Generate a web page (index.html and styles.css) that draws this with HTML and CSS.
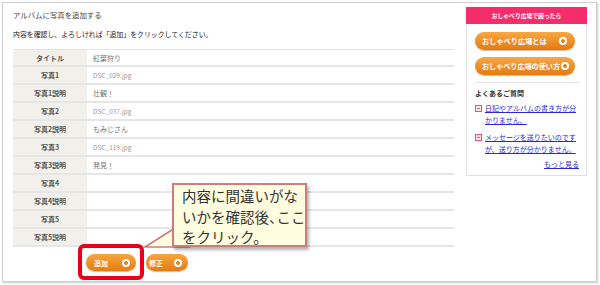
FILE: index.html
```html
<!DOCTYPE html>
<html lang="ja">
<head>
<meta charset="utf-8">
<link rel="stylesheet" href="styles.css">
</head>
<body>
<div class="frame">
  <div class="main">
    <div class="title">アルバムに写真を追加する</div>
    <div class="lead">内容を確認し、よろしければ「追加」をクリックしてください。</div>
    <div class="table">
      <div class="row"><div class="lab">タイトル</div><div class="val">紅葉狩り</div></div>
      <div class="row"><div class="lab">写真1</div><div class="val file">DSC_029.jpg</div></div>
      <div class="row"><div class="lab">写真1説明</div><div class="val">壮観！</div></div>
      <div class="row"><div class="lab">写真2</div><div class="val file">DSC_037.jpg</div></div>
      <div class="row"><div class="lab">写真2説明</div><div class="val">もみじさん</div></div>
      <div class="row"><div class="lab">写真3</div><div class="val file">DSC_119.jpg</div></div>
      <div class="row"><div class="lab">写真3説明</div><div class="val">発見！</div></div>
      <div class="row"><div class="lab">写真4</div><div class="val"></div></div>
      <div class="row"><div class="lab">写真4説明</div><div class="val"></div></div>
      <div class="row"><div class="lab">写真5</div><div class="val"></div></div>
      <div class="row"><div class="lab">写真5説明</div><div class="val"></div></div>
    </div>
    <div class="actions">
      <span class="pill pill-add">追加<i class="dot"></i></span>
      <span class="pill pill-edit">修正<i class="dot"></i></span>
    </div>
  </div>
  <div class="side">
    <div class="side-head">おしゃべり広場で困ったら</div>
    <div class="side-body">
      <span class="sbtn">おしゃべり広場とは<i class="dot"></i></span>
      <span class="sbtn sbtn-2">おしゃべり広場の使い方<i class="dot"></i></span>
      <div class="sep"></div>
      <div class="faq-title">よくあるご質問</div>
      <div class="faq"><i class="ficon"></i><a href="#">日記やアルバムの書き方が分かりません。</a></div>
      <div class="faq"><i class="ficon"></i><a href="#">メッセージを送りたいのですが、送り方が分かりません。</a></div>
      <div class="more"><a href="#">もっと見る</a></div>
    </div>
  </div>

  <div class="highlight"></div>
  <svg class="tail" width="50" height="30" viewBox="0 0 50 30">
    <polygon points="34,5 4,24 48,24" fill="#fffde0" stroke="#cf7b7b" stroke-width="1.6"/>
  </svg>
  <div class="callout">内容に間違いがな<br>いかを確認後<span class="narrow">、</span>ここ<br>をクリック。</div>
</div>
</body>
</html>
```
FILE: styles.css
```css
* { box-sizing: border-box; }
html, body { margin: 0; padding: 0; background: #fff; }
body {
  width: 600px;
  height: 285px;
  overflow: hidden;
  font-family: "Noto Sans CJK JP", "Noto Sans", sans-serif;
}
.frame {
  position: relative;
  margin: 2px 3px 0 2px;
  height: 280px;
  border: 1px solid #cfcfcf;
  box-shadow: 1px 1px 0 #dcdcdc, 2px 2px 0 #eeeeee;
  display: flex;
  align-items: flex-start;
}
.main {
  padding: 6px 0 0 10px;
  width: 451px;
}
.title {
  font-size: 7.4px;
  line-height: 12px;
  color: #444;
}
.lead {
  margin-top: 7px;
  font-size: 6.9px;
  line-height: 12px;
  color: #222;
}
.table {
  margin-top: 9px;
  width: 441px;
  border-top: 1px solid #e4e4e4;
}
.row {
  display: flex;
  height: 18px;
  border-bottom: 2px solid #e6e6e6;
}
.row:first-child { height: 17px; }
.lab {
  flex: none;
  width: 74px;
  background: #f1f0ea;
  color: #555;
  font-size: 7px;
  font-weight: bold;
  text-align: center;
  line-height: 16px;
}
.val {
  padding-left: 6px;
  color: #777;
  font-size: 7px;
  line-height: 16px;
}
.val.file { color: #999; font-size: 6.5px; }
.actions {
  display: flex;
  gap: 10px;
  margin: 7px 0 0 73px;
}
.pill {
  display: flex;
  align-items: center;
  height: 17px;
  border-radius: 9px;
  background: linear-gradient(#f6a63f, #e57c12);
  box-shadow: 0 1px 1px rgba(120,60,0,.35);
  color: #fff;
  font-size: 7px;
  font-weight: bold;
  padding-left: 8px;
}
.pill-add { width: 50px; }
.pill-edit { width: 42px; padding-left: 3px; }
.pill .dot { margin-left: auto; margin-right: 6px; }
.dot {
  flex: none;
  display: block;
  width: 8px;
  height: 8px;
  border-radius: 50%;
  background: radial-gradient(circle, #e8861a 0 1.6px, #fff 2px);
}
.side {
  margin-left: 12px;
  margin-top: 4px;
  width: 121px;
  border: 1px solid #e0e0e0;
  border-top: none;
}
.side-head {
  height: 17px;
  margin: 0 -1px;
  background: #f52d6b;
  color: #fff;
  font-size: 5.8px;
  font-weight: bold;
  text-align: center;
  line-height: 17px;
}
.side-body {
  padding: 8px 7px 5px 8px;
  display: flex;
  flex-direction: column;
}
.sbtn {
  display: flex;
  align-items: center;
  white-space: nowrap;
  width: 100px;
  height: 18px;
  border-radius: 9px;
  background: linear-gradient(#f8a844, #e37a10);
  box-shadow: 0 1px 1px rgba(120,60,0,.35);
  color: #fff;
  font-size: 7.2px;
  font-weight: bold;
  padding-left: 7px;
  margin-bottom: 7px;
}
.sbtn .dot { margin-left: auto; margin-right: 8px; }
.sbtn-2 { letter-spacing: -0.1px; }
.sbtn-2 .dot { margin-left: 1px; margin-right: 5px; }
.sep {
  height: 1px;
  background: #e6e6e6;
  margin: 0 0 4px 0;
  width: 105px;
}
.faq-title {
  font-size: 7px;
  font-weight: bold;
  color: #333;
  line-height: 12px;
  margin-bottom: 4px;
}
.faq {
  display: flex;
  align-items: flex-start;
  font-size: 7px;
  line-height: 11.5px;
  margin-bottom: 6px;
}
.faq a, .more a { color: #2a2ad0; text-decoration: underline; }
.ficon {
  flex: none;
  width: 7px;
  height: 7px;
  margin: 2px 3px 0 0;
  border: 1px solid #ee4f7a;
  background: #fde9ee;
  position: relative;
}
.ficon::after {
  content: "";
  position: absolute;
  left: 1px; top: 2px;
  width: 3px; height: 1px;
  background: #ee4f7a;
}
.more {
  text-align: right;
  font-size: 7px;
  line-height: 11px;
  margin-top: -2px;
}
.highlight {
  position: absolute;
  left: 75px;
  top: 241px;
  width: 66px;
  height: 36px;
  border: 4px solid #e6001a;
  border-radius: 6px;
}
.tail {
  position: absolute;
  left: 138px;
  top: 220px;
}
.callout {
  position: absolute;
  left: 169px;
  top: 180px;
  width: 135px;
  height: 64px;
  background: #fffde0;
  border: 2px solid #cf7b7b;
  box-shadow: 2px 3px 3px rgba(0,0,0,.3);
  color: #333;
  font-size: 14.5px;
  line-height: 20.5px;
  padding: 1px 0 0 8px;
  white-space: nowrap;
}
.narrow { letter-spacing: -7px; }
```
